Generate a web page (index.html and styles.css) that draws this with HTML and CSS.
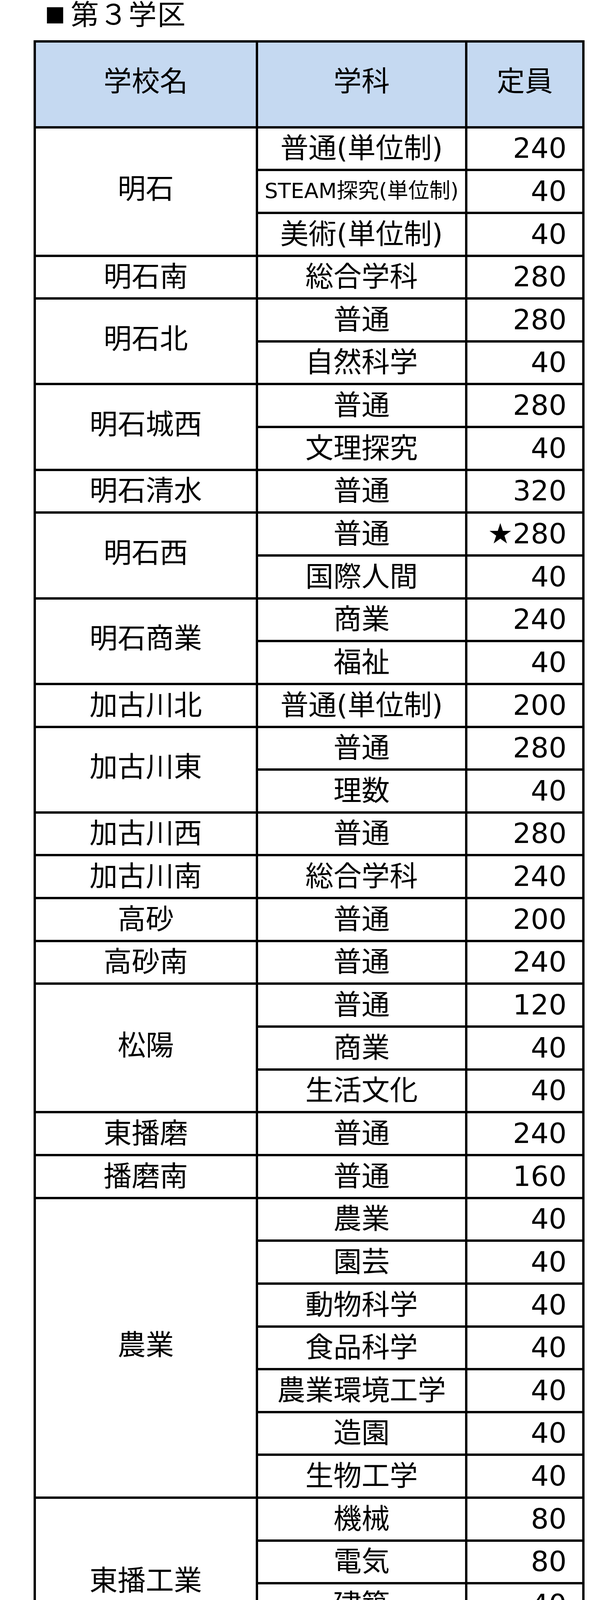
FILE: index.html
```html
<!DOCTYPE html>
<html lang="ja">
<head>
<meta charset="utf-8">
<title>第３学区</title>
<link rel="stylesheet" href="styles.css">
</head>
<body>
<h1 class="title"><span class="sq">■</span>第３学区</h1>
<div class="quota" role="table">
  <div class="hd" role="columnheader">学校名</div><div class="hd" role="columnheader">学科</div><div class="hd" role="columnheader">定員</div>

  <div class="school multi s3">明石</div><div class="dept">普通(単位制)</div><div class="num">240</div>
  <div class="dept small">STEAM探究(単位制)</div><div class="num">40</div>
  <div class="dept">美術(単位制)</div><div class="num">40</div>

  <div class="school">明石南</div><div class="dept">総合学科</div><div class="num">280</div>

  <div class="school multi s2">明石北</div><div class="dept">普通</div><div class="num">280</div>
  <div class="dept">自然科学</div><div class="num">40</div>

  <div class="school multi s2">明石城西</div><div class="dept">普通</div><div class="num">280</div>
  <div class="dept">文理探究</div><div class="num">40</div>

  <div class="school">明石清水</div><div class="dept">普通</div><div class="num">320</div>

  <div class="school multi s2">明石西</div><div class="dept">普通</div><div class="num">★280</div>
  <div class="dept">国際人間</div><div class="num">40</div>

  <div class="school multi s2">明石商業</div><div class="dept">商業</div><div class="num">240</div>
  <div class="dept">福祉</div><div class="num">40</div>

  <div class="school">加古川北</div><div class="dept">普通(単位制)</div><div class="num">200</div>

  <div class="school multi s2">加古川東</div><div class="dept">普通</div><div class="num">280</div>
  <div class="dept">理数</div><div class="num">40</div>

  <div class="school">加古川西</div><div class="dept">普通</div><div class="num">280</div>
  <div class="school">加古川南</div><div class="dept">総合学科</div><div class="num">240</div>
  <div class="school">高砂</div><div class="dept">普通</div><div class="num">200</div>
  <div class="school">高砂南</div><div class="dept">普通</div><div class="num">240</div>

  <div class="school multi s3">松陽</div><div class="dept">普通</div><div class="num">120</div>
  <div class="dept">商業</div><div class="num">40</div>
  <div class="dept">生活文化</div><div class="num">40</div>

  <div class="school">東播磨</div><div class="dept">普通</div><div class="num">240</div>
  <div class="school">播磨南</div><div class="dept">普通</div><div class="num">160</div>

  <div class="school multi s7">農業</div><div class="dept">農業</div><div class="num">40</div>
  <div class="dept">園芸</div><div class="num">40</div>
  <div class="dept">動物科学</div><div class="num">40</div>
  <div class="dept">食品科学</div><div class="num">40</div>
  <div class="dept">農業環境工学</div><div class="num">40</div>
  <div class="dept">造園</div><div class="num">40</div>
  <div class="dept">生物工学</div><div class="num">40</div>

  <div class="school multi s4">東播工業</div><div class="dept">機械</div><div class="num">80</div>
  <div class="dept">電気</div><div class="num">80</div>
  <div class="dept">建築</div><div class="num">40</div>
  <div class="dept">土木</div><div class="num">40</div>

  <div class="school multi s2">西脇</div><div class="dept">普通</div><div class="num">200</div>
  <div class="dept">生活情報</div><div class="num">40</div>

  <div class="school multi s4">西脇工業</div><div class="dept">機械</div><div class="num">80</div>
  <div class="dept">電気</div><div class="num">40</div>
  <div class="dept">ロボット工学</div><div class="num">40</div>
  <div class="dept">総合技術</div><div class="num">40</div>

  <div class="school multi s2">三木</div><div class="dept">普通</div><div class="num">★240</div>
  <div class="dept">国際総合</div><div class="num">40</div>

  <div class="school">三木総合(仮称)</div><div class="dept">総合学科</div><div class="num">280</div>

  <div class="school multi s3">小野</div><div class="dept">普通</div><div class="num">160</div>
  <div class="dept">ビジネス探究</div><div class="num">80</div>
  <div class="dept">科学探究</div><div class="num">40</div>

  <div class="school multi s3">小野工業</div><div class="dept">機械工学</div><div class="num">80</div>
  <div class="dept">電子</div><div class="num">40</div>
  <div class="dept">生活創造</div><div class="num">40</div>

  <div class="school multi s3">社</div><div class="dept">普通</div><div class="num">160</div>
  <div class="dept">生活科学</div><div class="num">40</div>
  <div class="dept">体育</div><div class="num">40</div>

  <div class="school">多可</div><div class="dept">普通</div><div class="num">80</div>

  <div class="school multi s2">北条</div><div class="dept">普通</div><div class="num">80</div>
  <div class="dept small">STEAM探究(単位制)</div><div class="num">40</div>

  <div class="school multi s3">播磨農業</div><div class="dept">農業経営</div><div class="num">40</div>
  <div class="dept">園芸</div><div class="num">40</div>
  <div class="dept">畜産</div><div class="num">40</div>
</div>
<p class="note">＜注意＞（仮称）は統合再編により2025年４月に開校<br>する新設校で、25年１月に正式決定予定。前年度より定<br>員が増えた学科の定員欄に★を、減った学科の定員欄に<br>網掛けをしている(単位制への改編は除く。ただし姫路飾<br>西は単位制への改編に併せて定員が増えたため★を付け<br>ている)。</p>
</body>
</html>
```

FILE: styles.css
```css
html, body {
  margin: 0;
  padding: 0;
  background: #ffffff;
}

body {
  font-family: "DejaVu Sans", "Noto Sans CJK JP", sans-serif;
  color: #000000;
}

.title {
  font-family: "Noto Sans CJK JP", sans-serif;
  font-weight: 400;
  font-size: 72px;
  line-height: 64px;
  height: 64px;
  letter-spacing: 2px;
  margin: 0;
  padding-left: 115px;
  white-space: nowrap;
}

.title .sq {
  font-size: 52px;
  margin-right: 12px;
  vertical-align: 4px;
}

.quota {
  display: grid;
  grid-template-columns: 569.5px 536px 300px;
  grid-template-rows: 220px;
  grid-auto-rows: 109.65px;
  width: max-content;
  margin: 38.6px 0 0 85.5px;
  border-top: 6px solid #000000;
  border-left: 6px solid #000000;
  font-size: 72px;
  line-height: 1.2;
}

.quota > div {
  box-sizing: border-box;
  display: flex;
  align-items: center;
  justify-content: center;
  border-right: 6px solid #000000;
  border-bottom: 6px solid #000000;
  padding: 0 0 2px 0;
  white-space: nowrap;
  min-width: 0;
}

.quota > .hd {
  background: #c5d9f1;
  padding-bottom: 14px;
}

.quota > .school { grid-column: 1; }
.quota > .school.multi { padding-bottom: 14px; }
.s2 { grid-row: span 2; }
.s3 { grid-row: span 3; }
.s4 { grid-row: span 4; }
.s7 { grid-row: span 7; }

.quota > .dept { grid-column: 2; }
.quota > .dept.small { font-size: 54px; }

.quota > .num {
  grid-column: 3;
  justify-content: flex-end;
  padding-right: 40px;
}

.note {
  margin: -3.6px 0 0 0;
  padding-left: 100px;
  font-size: 54.4px;
  line-height: 89.2px;
  white-space: nowrap;
}
```
